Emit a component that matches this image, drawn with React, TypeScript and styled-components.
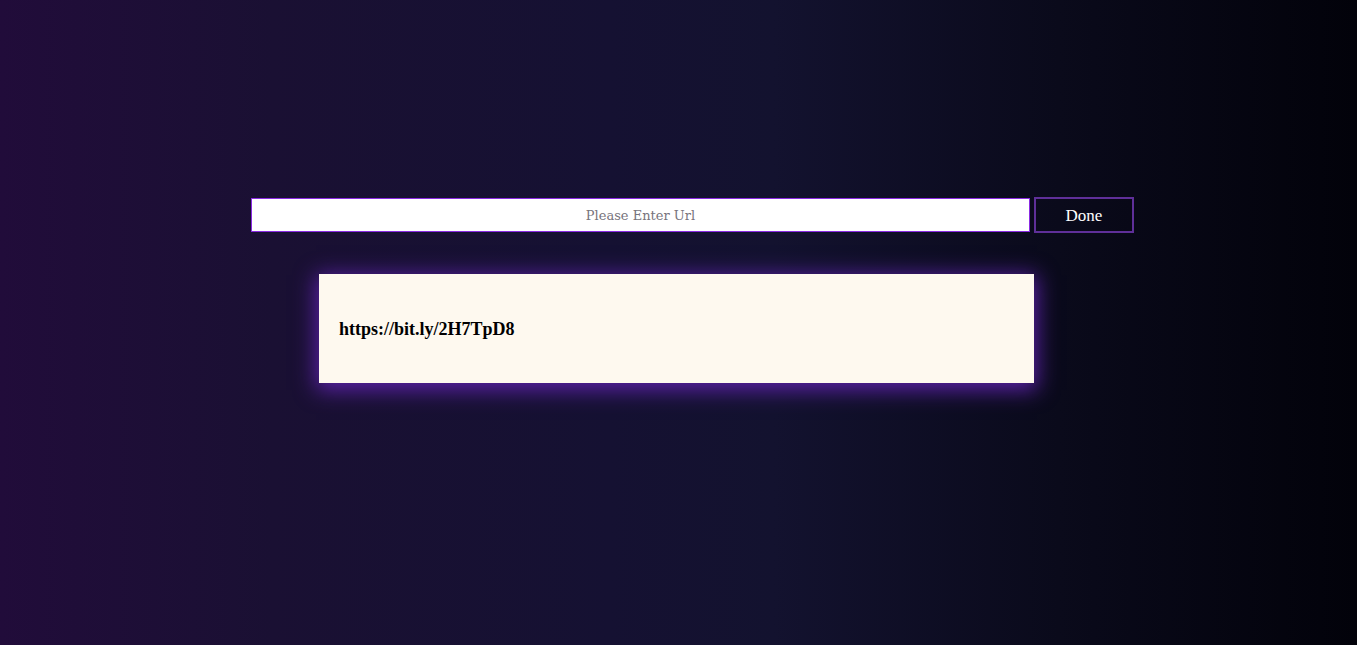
import React from "react";
import styled, { createGlobalStyle } from "styled-components";

const Global = createGlobalStyle`
  html, body { margin: 0; padding: 0; height: 100%; }
  body {
    background: linear-gradient(to right, #210c3a 0%, #1a1033 20%, #151132 45%, #13122f 57%, #0a0a1b 78%, #02020a 100%);
    background-attachment: fixed;
    font-family: "Liberation Serif", serif;
  }
  #root { min-height: 100vh; }
`;

const Page = styled.main`
  display: flex;
  flex-direction: column;
  padding-top: 197px;
  min-height: 100vh;
  box-sizing: border-box;
`;

const Form = styled.form`
  display: flex;
  align-items: center;
  gap: 4px;
  margin-left: 251px;
`;

const UrlInput = styled.input`
  width: 779px;
  height: 34px;
  box-sizing: border-box;
  border: 1px solid #8a2be2;
  background: #ffffff;
  text-align: center;
  padding-top: 2px;
  font-family: "DejaVu Serif", serif;
  font-size: 13px;
  color: #333;
  outline: none;
  &::placeholder { color: #77747c; }
`;

const DoneButton = styled.button`
  width: 100px;
  height: 36px;
  box-sizing: border-box;
  border: 2px solid #5f2f99;
  background: transparent;
  color: #ffffff;
  font-family: "Liberation Serif", serif;
  font-size: 17px;
  padding: 2px 0 0;
  cursor: pointer;
`;

const Card = styled.section`
  margin-top: 41px;
  margin-left: 319px;
  width: 715px;
  height: 109px;
  background: #fef9ef;
  box-shadow: 0 4px 20px 3px #5b22a6;
  display: flex;
  align-items: center;
  padding: 2px 0 0 20px;
  box-sizing: border-box;
`;

const ShortUrl = styled.strong`
  font-family: "Liberation Serif", serif;
  font-size: 18px;
  color: #000;
`;

export default function App() {
  return (
    <>
      <Global />
      <Page>
        <Form onSubmit={(e) => e.preventDefault()}>
          <UrlInput placeholder="Please Enter Url" />
          <DoneButton type="submit">Done</DoneButton>
        </Form>
        <Card>
          <ShortUrl>https://bit.ly/2H7TpD8</ShortUrl>
        </Card>
      </Page>
    </>
  );
}
